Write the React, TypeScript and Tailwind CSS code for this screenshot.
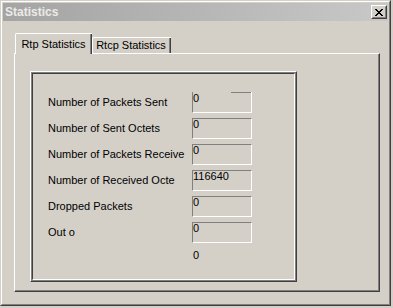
const rows = [
  { label: "Number of Packets Sent", value: "0", partialTop: true },
  { label: "Number of Sent Octets", value: "0" },
  { label: "Number of Packets Receive", value: "0" },
  { label: "Number of Received Octe", value: "116640" },
  { label: "Dropped Packets", value: "0" },
  { label: "Out o", value: "0" },
];

function CloseGlyph() {
  const pixels = [
    "XX....XX",
    ".XX..XX.",
    "..XXXX..",
    "...XX...",
    "..XXXX..",
    ".XX..XX.",
    "XX....XX",
  ];
  return (
    <svg width="8" height="7" viewBox="0 0 8 7" shapeRendering="crispEdges">
      {pixels.map((row, y) =>
        row.split("").map((c, x) =>
          c === "X" ? <rect key={`${x}-${y}`} x={x} y={y} width="1" height="1" fill="#000" /> : null
        )
      )}
    </svg>
  );
}

function ReadOnlyBox({ value, partialTop }: { value: string; partialTop?: boolean }) {
  return (
    <div
      className={`w-[60px] h-[21px] flex flex-col border-l border-r border-b border-l-[#808080] border-r-white border-b-white ${
        partialTop ? "" : "border-t border-t-[#808080]"
      }`}
    >
      {partialTop && (
        <div className="h-px flex justify-end">
          <div className="w-[20px] h-px bg-[#808080]" />
        </div>
      )}
      <span className="leading-[10px]">{value}</span>
    </div>
  );
}

export default function App() {
  return (
    <div className="w-[393px] h-[308px] bg-[#d4d0c8] font-['Liberation_Sans',Arial,sans-serif] text-[11px] text-black">
      {/* window frame */}
      <div className="w-[391px] h-[306px] border border-[#d4d0c8] border-r-[#404040] border-b-[#404040]">
        <div className="h-full border border-white border-r-[#808080] border-b-[#808080] p-px flex flex-col">
          {/* title bar */}
          <div className="h-[18px] flex items-center justify-between pl-[2px] pr-px bg-linear-to-r from-[#a4a4a4] to-[#c8c8c8]">
            <span className="text-[12px] font-bold text-[#ecebe6]">Statistics</span>
            <div className="w-[16px] h-[14px] border border-white border-r-[#404040] border-b-[#404040]">
              <div className="h-full border border-transparent border-r-[#808080] border-b-[#808080] bg-[#d4d0c8] flex items-center justify-center">
                <CloseGlyph />
              </div>
            </div>
          </div>

          {/* body */}
          <div className="pl-[11px] pt-[12px]">
            {/* tabs */}
            <div className="flex items-end pl-px h-[20px]">
              <div className="relative z-10 -mb-px w-[77px] h-[21px] bg-[#d4d0c8] border-l border-t border-white rounded-tl-[2px] flex">
                <div className="flex-1 flex items-center justify-center pl-px border-r border-[#808080]">
                  Rtp Statistics
                </div>
                <div className="w-px bg-[#404040]" />
              </div>
              <div className="w-[79px] h-[16px] border-l border-t border-white rounded-tl-[2px] flex">
                <div className="flex-1 flex items-center justify-center border-r border-[#808080]">
                  Rtcp Statistics
                </div>
                <div className="w-px bg-[#404040]" />
              </div>
            </div>

            {/* tab panel */}
            <div className="w-[366px] h-[239px] border-l border-t border-white border-r border-b border-r-[#404040] border-b-[#404040]">
              <div className="h-full border-r border-b border-[#808080] pl-[15px] pt-[17px]">
                {/* group box */}
                <div className="w-[267px] h-[211px] border border-white border-r-[#404040] border-b-[#404040]">
                  <div className="h-full border border-[#808080]">
                    <div className="h-full border border-[#404040] border-r-white border-b-white pl-[15px] pt-[18px] flex flex-col gap-[5px]">
                      {rows.map((r) => (
                        <div key={r.label} className="flex items-center h-[21px]">
                          <span className="w-[144px] whitespace-nowrap overflow-hidden">{r.label}</span>
                          <ReadOnlyBox value={r.value} partialTop={r.partialTop} />
                        </div>
                      ))}
                      <div className="pl-[145px] leading-[13px] mt-px">0</div>
                    </div>
                  </div>
                </div>
              </div>
            </div>
          </div>
        </div>
      </div>
    </div>
  );
}
